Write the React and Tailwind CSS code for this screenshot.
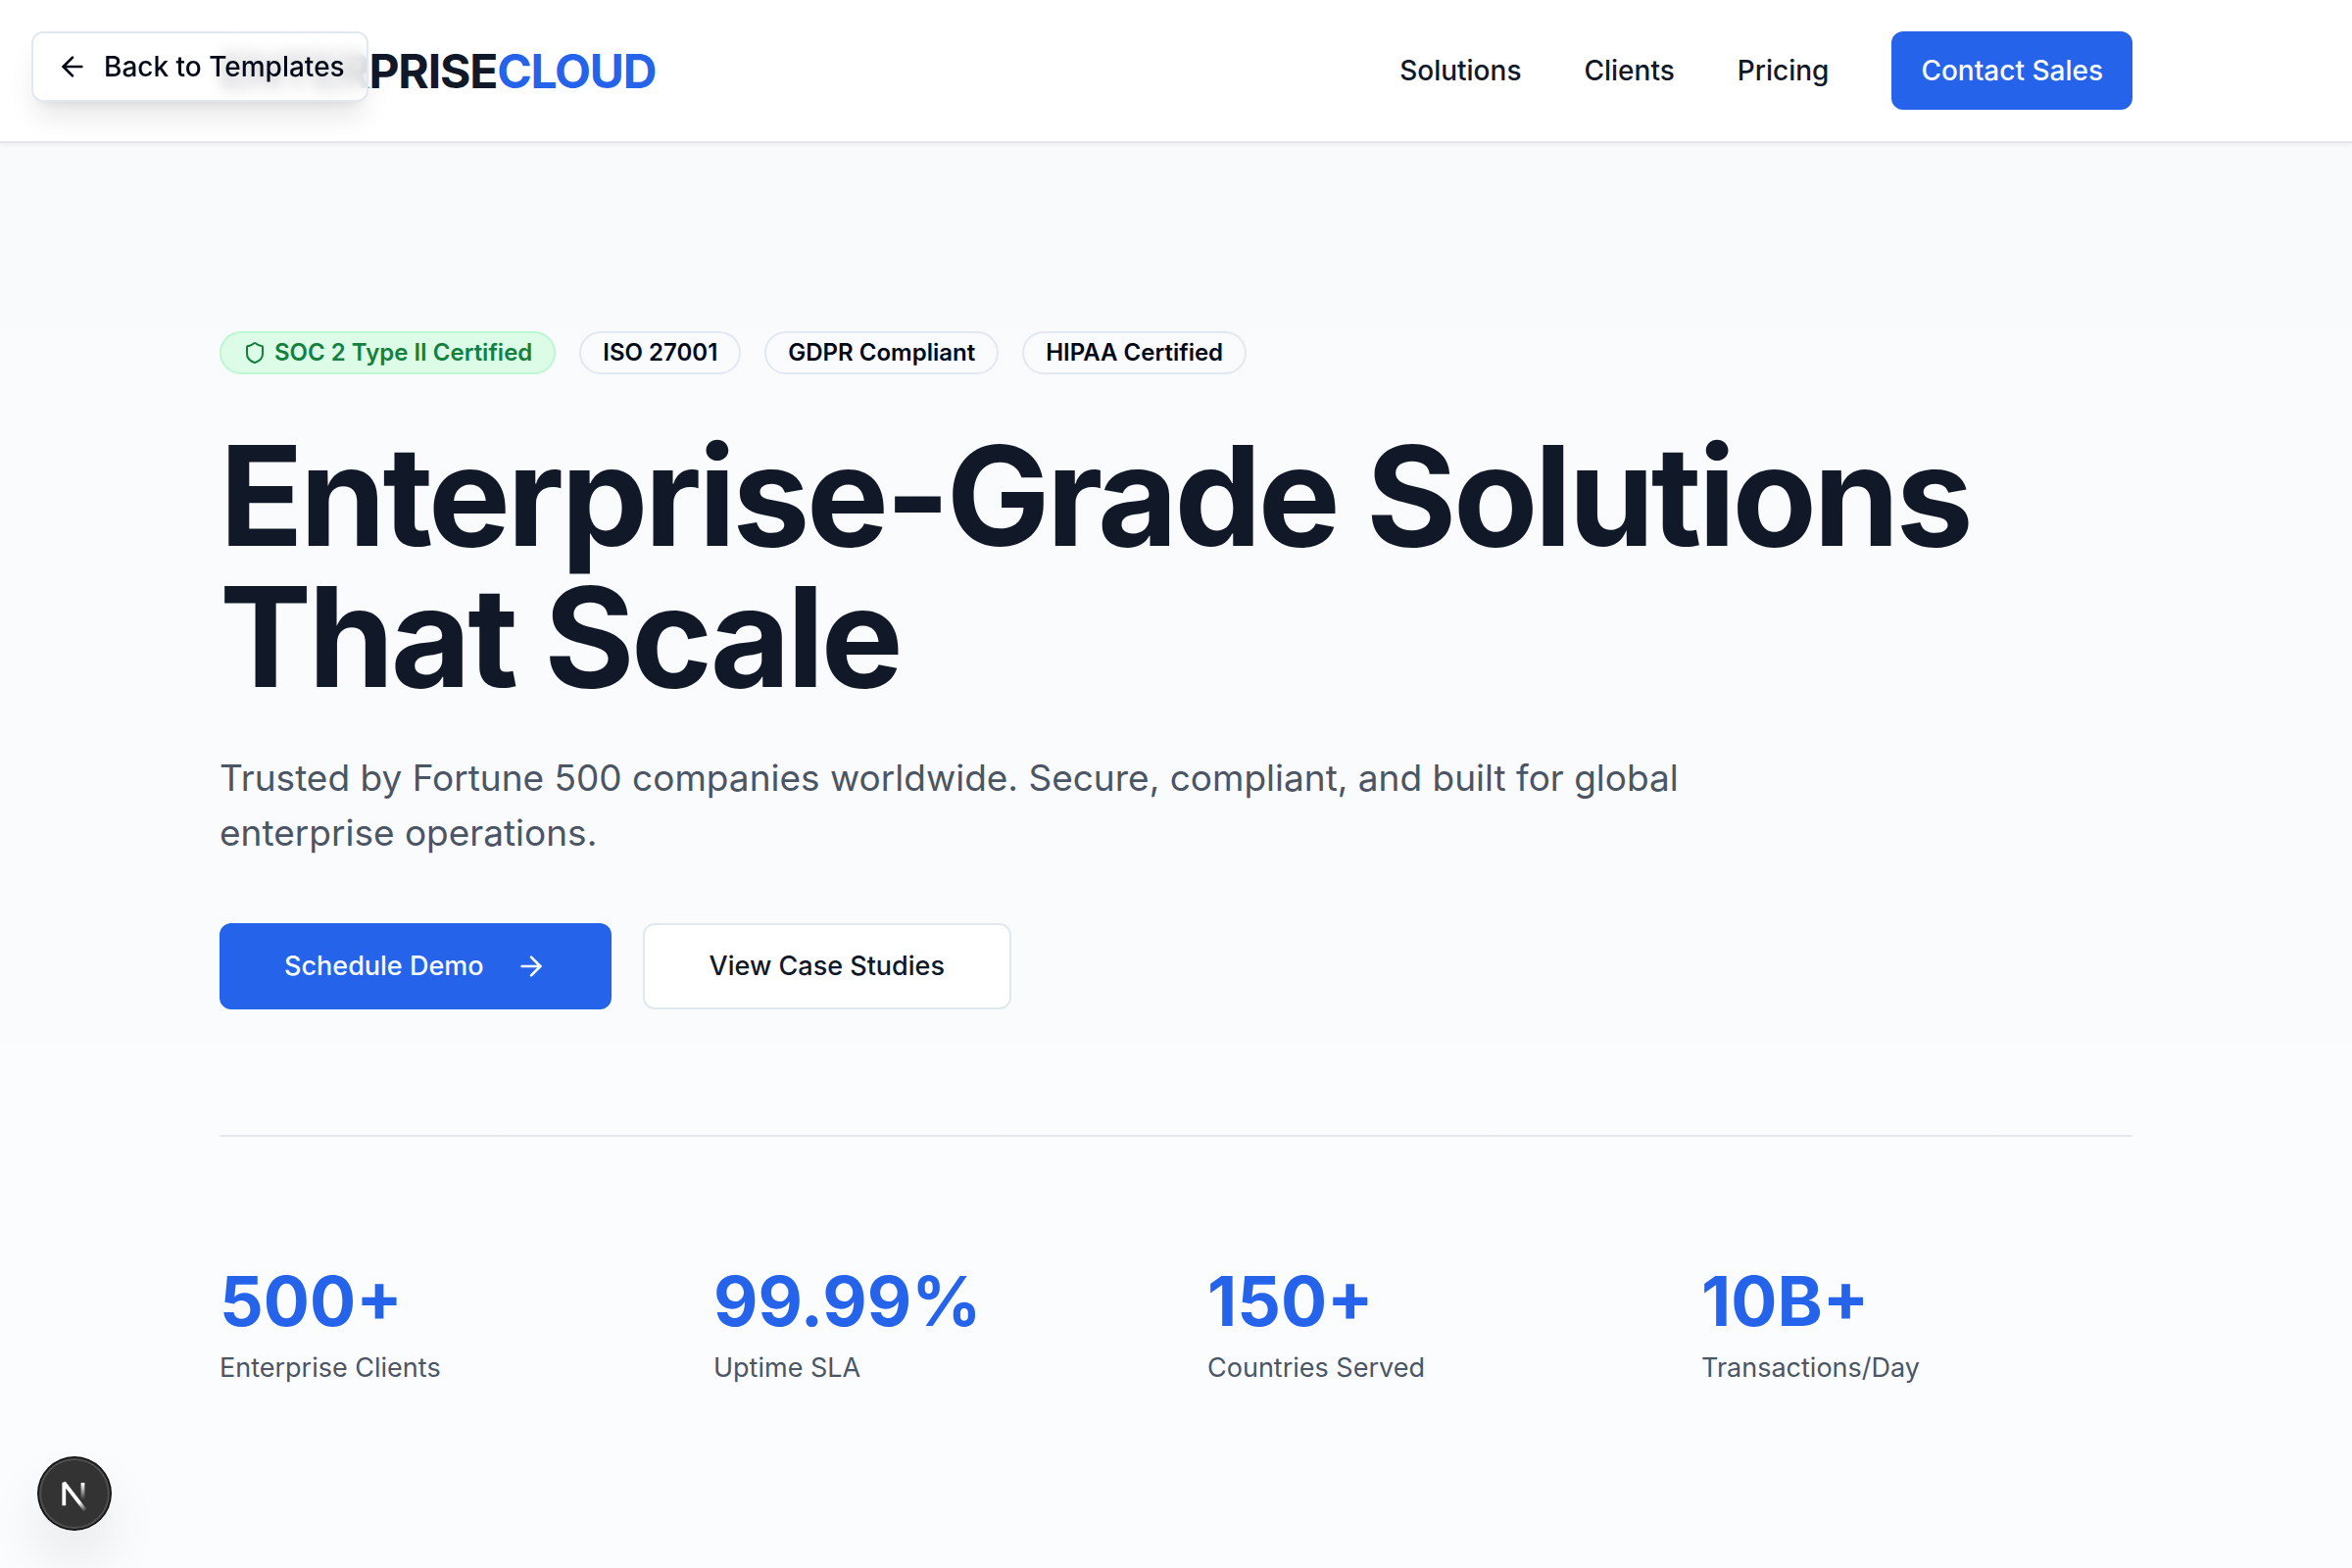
import React from "react";
import { ArrowLeft, ArrowRight, Shield } from "lucide-react";

const navLinks = ["Solutions", "Clients", "Pricing"];
const badges = ["ISO 27001", "GDPR Compliant", "HIPAA Certified"];
const stats = [
  { value: "500+", label: "Enterprise Clients" },
  { value: "99.99%", label: "Uptime SLA" },
  { value: "150+", label: "Countries Served" },
  { value: "10B+", label: "Transactions/Day" },
];

function Header() {
  return (
    <header className="relative z-10 border-b-2 border-[#e5e7eb] bg-white shadow-[0_2px_4px_rgba(0,0,0,0.05)]">
      <div className="mx-auto flex max-w-[1952px] items-center justify-between py-8">
        <div className="pt-0.5 text-[48px] leading-[64px] font-bold tracking-tight text-[#111827]">
          ENTERPRISE<span className="text-[#2563eb]">CLOUD</span>
        </div>
        <nav className="flex items-center gap-16 text-[28px] leading-10 font-medium text-[#111827]">
          {navLinks.map((label) => (
            <a key={label} href="#">
              {label}
            </a>
          ))}
          <button className="h-20 rounded-xl bg-[#2563eb] px-[30px] font-medium text-[#f8fafc]">
            Contact Sales
          </button>
        </nav>
      </div>
    </header>
  );
}

function Hero() {
  return (
    <main className="flex-1 bg-linear-to-b from-[#f9fafc] to-[#fbfcfe]">
      <div className="mx-auto max-w-[1952px] pt-48 pb-44">
        <ul className="flex flex-wrap gap-6 text-[24px] leading-8 font-semibold text-[#020817]">
          <li className="flex h-11 items-center gap-2 rounded-full border-2 border-[#bbf7d0] bg-[#dcfce7] px-[22px] text-[#15803d]">
            <Shield size={24} />
            SOC 2 Type II Certified
          </li>
          {badges.map((label) => (
            <li
              key={label}
              className="flex h-11 items-center rounded-full border-2 border-[#e2e8f0] px-[22px]"
            >
              {label}
            </li>
          ))}
        </ul>
        <h1 className="mt-13 text-[141px] leading-[144px] font-bold tracking-tight text-[#111827]">
          Enterprise-Grade Solutions
          <br />
          That Scale
        </h1>
        <p className="mt-11 max-w-[1536px] text-[37px] leading-14 text-[#4b5563]">
          Trusted by Fortune 500 companies worldwide. Secure, compliant, and
          built for global enterprise operations.
        </p>
        <div className="mt-16 flex gap-8 text-[27px] leading-10 font-medium">
          <button className="flex h-22 items-center gap-8 rounded-xl bg-[#2563eb] px-[66px] text-[#f8fafc]">
            Schedule Demo
            <ArrowRight size={32} />
          </button>
          <button className="h-22 rounded-xl border-2 border-[#e2e8f0] bg-white px-[66px] text-[#111827]">
            View Case Studies
          </button>
        </div>
        <dl className="mt-32 grid grid-cols-4 gap-16 border-t-2 border-[#e5e7eb] pt-32">
          {stats.map(({ value, label }) => (
            <div key={label} className="flex flex-col-reverse gap-2">
              <dt className="text-[27px] leading-10 text-[#4b5563]">{label}</dt>
              <dd className="text-[70px] leading-20 font-bold text-[#2563eb]">
                {value}
              </dd>
            </div>
          ))}
        </dl>
      </div>
    </main>
  );
}

function DevBadge() {
  return (
    <button
      aria-label="Open developer tools"
      className="fixed bottom-[38px] left-[38px] z-20 rounded-full shadow-[0_32px_64px_-16px_rgba(0,0,0,0.24)]"
    >
      <svg width="76" height="76" viewBox="0 0 76 76" fill="none">
        <defs>
          <linearGradient id="diag" x1="42.5" y1="47.3" x2="49.5" y2="55.8" gradientUnits="userSpaceOnUse">
            <stop stopColor="#fff" />
            <stop offset="1" stopColor="#fff" stopOpacity="0" />
          </linearGradient>
          <linearGradient id="stem" x1="46" y1="28" x2="46" y2="44" gradientUnits="userSpaceOnUse">
            <stop stopColor="#fff" />
            <stop offset="1" stopColor="#fff" stopOpacity="0" />
          </linearGradient>
        </defs>
        <circle cx="38" cy="38" r="38" fill="#171717" />
        <circle cx="38" cy="38" r="36" fill="#505050" />
        <circle cx="38" cy="38" r="34" fill="#333333" />
        <path d="M49.2 55.4 L27.3 27 V50.2" stroke="url(#diag)" strokeWidth="3.8" strokeLinejoin="bevel" />
        <path d="M46.5 27 V50" stroke="url(#stem)" strokeWidth="3.8" />
      </svg>
    </button>
  );
}

export default function App() {
  return (
    <div className="flex min-h-screen flex-col font-[Inter,sans-serif]">
      <Header />
      <Hero />
      <a
        href="#"
        className="fixed top-8 left-8 z-20 flex h-18 items-center gap-4 rounded-xl border-2 border-[#e2e8f0] bg-white/80 pr-[22px] pl-6 text-[28px] leading-10 font-medium text-[#020817] shadow-[0_20px_30px_-6px_rgba(0,0,0,0.1),0_8px_12px_-8px_rgba(0,0,0,0.1)] backdrop-blur-sm"
      >
        <ArrowLeft size={32} />
        Back to Templates
      </a>
      <DevBadge />
    </div>
  );
}
